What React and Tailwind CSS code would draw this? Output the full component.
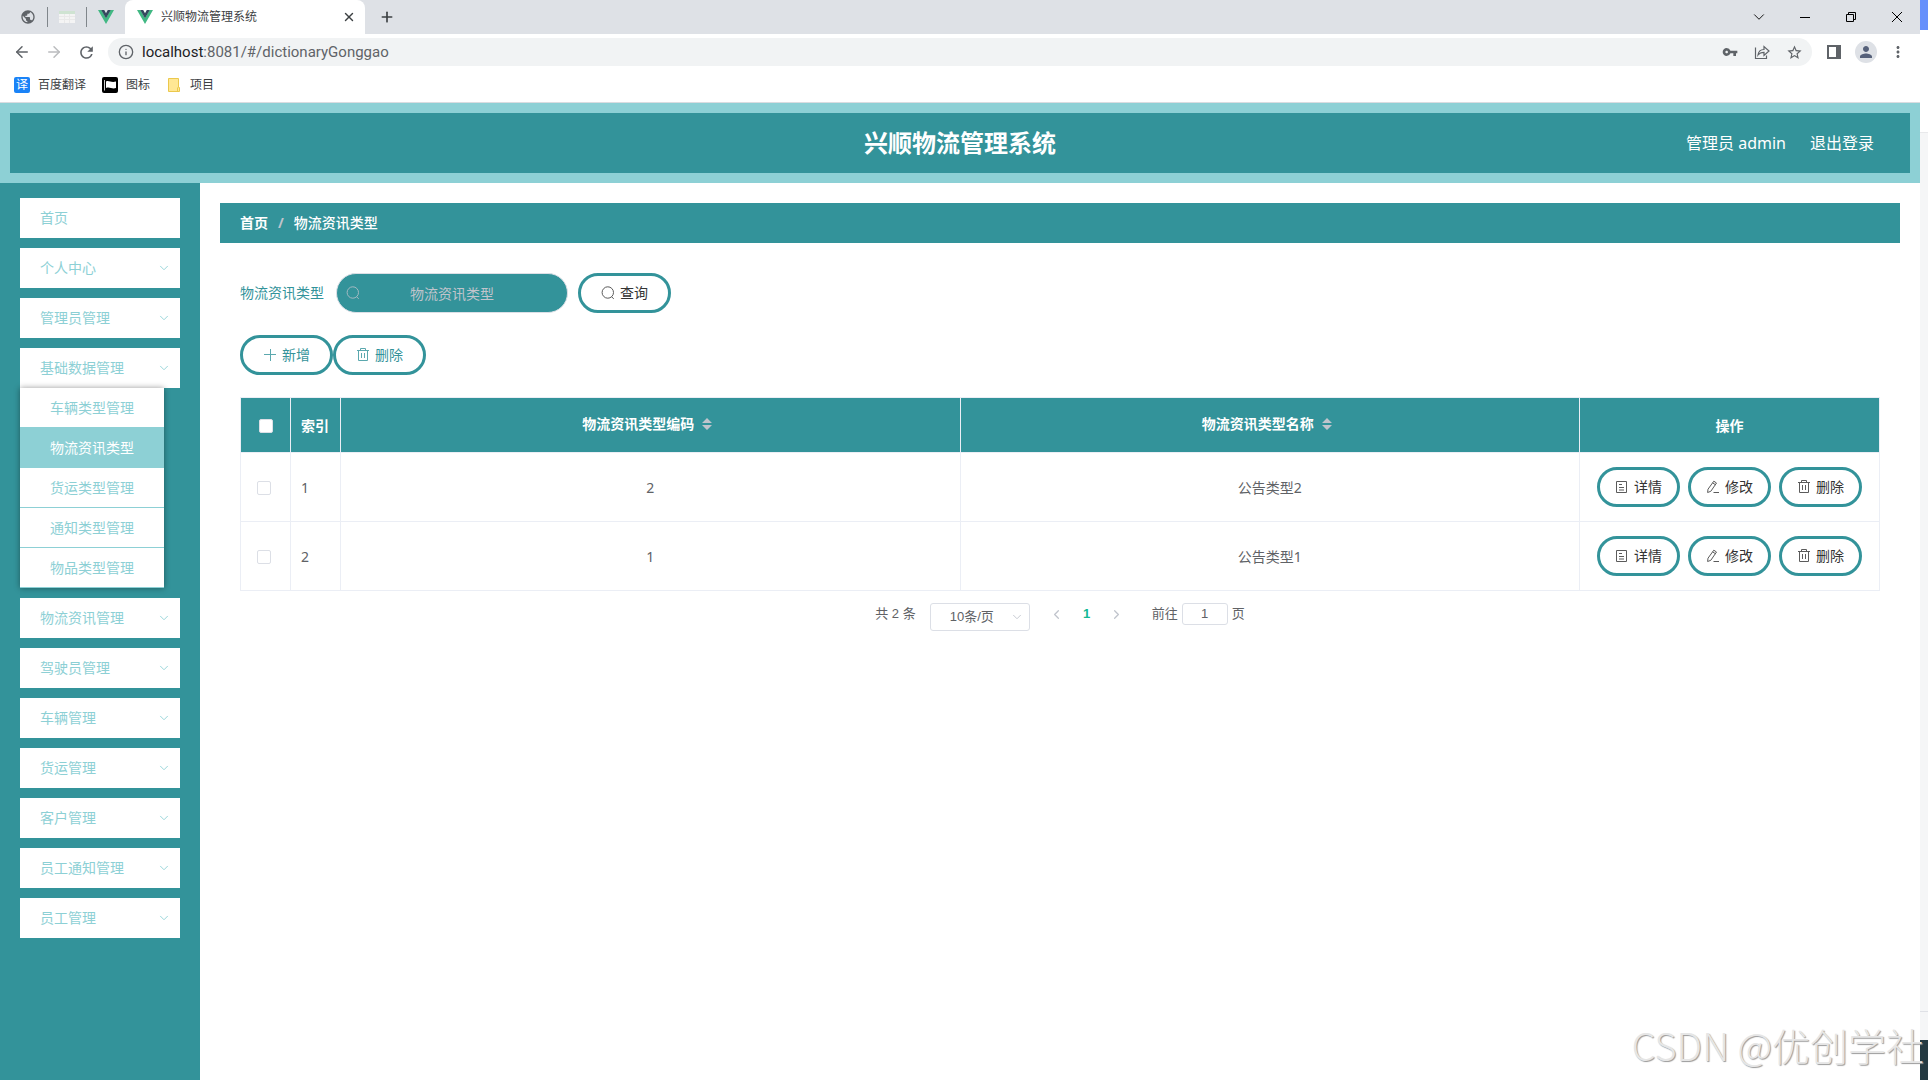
import { useState } from 'react';
import {
  ArrowLeft, ArrowRight, ChevronDown, ChevronLeft, ChevronRight, Info, Plus, X
} from 'lucide-react';
import { MdPublic, MdRefresh, MdVpnKey, MdStarBorder, MdPerson, MdMoreVert } from 'react-icons/md';

const MENU = [
  { title: '首页' },
  { title: '个人中心', children: [] },
  { title: '管理员管理', children: [] },
  {
    title: '基础数据管理',
    open: true,
    children: ['车辆类型管理', '物流资讯类型', '货运类型管理', '通知类型管理', '物品类型管理'],
  },
  { title: '物流资讯管理', children: [] },
  { title: '驾驶员管理', children: [] },
  { title: '车辆管理', children: [] },
  { title: '货运管理', children: [] },
  { title: '客户管理', children: [] },
  { title: '员工通知管理', children: [] },
  { title: '员工管理', children: [] },
];

const ROWS = [
  { id: 1, code: 2, name: '公告类型2' },
  { id: 2, code: 1, name: '公告类型1' },
];

/* ── Icons ── */
function VueLogo() {
  return (
    <svg viewBox="0 0 16 16" className="size-4 shrink-0">
      <path d="M0 1h3.4L8 9l4.6-8H16L8 15z" fill="#41b883" />
      <path d="M3.2 1h3L8 4.2 9.8 1h3L8 9.3z" fill="#35495e" />
    </svg>
  );
}

function SearchIcon() {
  return (
    <svg viewBox="0 0 14 14" className="size-[14px] shrink-0 opacity-80" fill="none" stroke="currentColor">
      <circle cx="6.8" cy="6.5" r="5.7" />
      <path d="M10.6 10.8l2.2 2" />
    </svg>
  );
}

function PlusIcon() {
  return (
    <svg viewBox="0 0 14 14" className="size-[14px] shrink-0 opacity-80" fill="none" stroke="currentColor">
      <path d="M1 6.5h12M7.5 1v12" />
    </svg>
  );
}

function TrashIcon() {
  return (
    <svg viewBox="0 0 14 14" className="size-[14px] shrink-0 opacity-80" fill="none" stroke="currentColor">
      <path d="M1 2.5h12M4.5 2.5v-2h5v2M2.5 2.5v10h9v-10M5.5 5v5M8.5 5v5" />
    </svg>
  );
}

function TicketIcon() {
  return (
    <svg viewBox="0 0 14 14" className="size-[14px] shrink-0 opacity-80" fill="none" stroke="currentColor">
      <path d="M1.5 1.5h10v11h-10zM4 4.5h3M4 7.5h5M4 10h5" />
    </svg>
  );
}

function EditIcon() {
  return (
    <svg viewBox="0 0 14 14" className="size-[14px] shrink-0 opacity-80" fill="none" stroke="currentColor">
      <path d="M7.8 1.2l2.7 1.8-5.7 8.3-3.2 1.2.4-3.3zM6.7 2.9l2.7 1.8M7.5 12.5H13" />
    </svg>
  );
}

function ShareIcon() {
  return (
    <svg viewBox="0 0 16 16" className="size-4" fill="none" stroke="currentColor" strokeWidth="1.2">
      <path d="M1.5 3.5v11h11v-3M4 11c.5-4 3-5.5 6-5.5V2.5L15 7l-5 4.5V8.3C7.5 8.3 5.500 9 4 11z" />
    </svg>
  );
}

function SortCaret() {
  return (
    <svg viewBox="0 0 10 12" className="w-[10px] h-3" fill="#c0c4cc">
      <path d="M5 0l5 5H0zM5 12l5-5H0z" />
    </svg>
  );
}

function PillButton({ icon: Icon, className, children }) {
  return (
    <button className={`h-10 flex items-center gap-[5px] rounded-full border-3 border-[#33939a] bg-white text-sm ${className}`}>
      <Icon />
      {children}
    </button>
  );
}

/* ── Browser window ── */
function TabBar() {
  return (
    <div className="h-[34px] bg-[#dee1e6] flex items-center text-[#5f6368]">
      <div className="w-[125px] flex items-center pl-5">
        <MdPublic size={16} />
        <span className="ml-[11px] w-px h-5 bg-[#80868b]" />
        <svg viewBox="0 0 16 12" className="w-4 h-3 ml-[11px]">
          <path d="M0 0h16v12H0z" fill="#f4f4f4" />
          <path d="M0 0h16v3H0z" fill="#cfe3d2" />
          <path d="M0 5.5h16M0 8.5h16M5.5 3v9M10.5 3v9" stroke="#e9e9e9" />
        </svg>
        <span className="ml-[11px] mr-[11px] w-px h-5 bg-[#80868b]" />
        <VueLogo />
      </div>
      <div className="w-60 h-full bg-white rounded-t-lg flex items-center pl-3">
        <VueLogo />
        <span className="ml-2 flex-1 text-xs text-[#3c4043]">兴顺物流管理系统</span>
        <button aria-label="关闭标签页" className="mr-[9px] text-[#3c4043]"><X size={14} strokeWidth={2.5} /></button>
      </div>
      <button aria-label="新标签页" className="ml-[14px] text-[#3c4043]"><Plus size={16} strokeWidth={2.5} /></button>
      <div className="ml-auto flex items-center text-black h-7">
        <button aria-label="搜索标签页" className="w-[46px] flex justify-center"><ChevronDown size={18} strokeWidth={1.2} /></button>
        <button aria-label="最小化" className="w-[46px] flex justify-center">
          <svg viewBox="0 0 10 10" className="size-[10px]" stroke="currentColor"><path d="M0 5.5h10" /></svg>
        </button>
        <button aria-label="还原" className="w-[46px] flex justify-center">
          <svg viewBox="0 0 10 10" className="size-[10px]" fill="none" stroke="currentColor"><path d="M.5 2.5h7v7h-7zM2.5 2.5v-2h7v7h-2" /></svg>
        </button>
        <button aria-label="关闭" className="w-[46px] flex justify-center">
          <svg viewBox="0 0 10 10" className="size-[10px]" stroke="currentColor"><path d="M0 0l10 10M10 0L0 10" /></svg>
        </button>
      </div>
    </div>
  );
}

function Toolbar() {
  return (
    <div className="h-9 flex items-center text-[#5f6368] pl-[13px] pr-[13px]">
      <button aria-label="后退" className="w-8"><ArrowLeft size={18} /></button>
      <button aria-label="前进" className="w-8 text-[#babcbe]"><ArrowRight size={18} /></button>
      <button aria-label="刷新" className="w-[31px]"><MdRefresh size={19} /></button>
      <div className="flex-1 h-7 rounded-full bg-[#f1f3f4] flex items-center pl-[10px] pr-[9px]">
        <Info size={16} />
        <div className="relative flex-1 ml-2 text-[15px] leading-5 font-[Roboto,sans-serif]">
          <input aria-label="地址" readOnly defaultValue="localhost:8081/#/dictionaryGonggao" className="w-full block bg-transparent outline-none" />
          <span aria-hidden="true" className="absolute left-0 top-0 text-[#202124] bg-[#f1f3f4]">localhost</span>
        </div>
        <div className="flex items-center gap-4">
          <MdVpnKey size={16} />
          <ShareIcon />
          <MdStarBorder size={17} />
        </div>
      </div>
      <svg viewBox="0 0 14 14" className="size-[14px] ml-[15px]">
        <path d="M1 1h12v12H1z" fill="#fff" stroke="currentColor" strokeWidth="2" />
        <path d="M9 0h5v14H9z" fill="currentColor" />
      </svg>
      <span className="size-[22px] ml-[14px] rounded-full bg-[#dee1e6] flex items-center justify-center text-[#56617a]">
        <MdPerson size={18} />
      </span>
      <button aria-label="更多" className="ml-[12px]"><MdMoreVert size={18} /></button>
    </div>
  );
}

function Bookmarks() {
  return (
    <div className="h-[33px] pb-[3px] border-b border-[#dadce0] flex items-center pl-[14px] text-xs text-[#3c4043]">
      <a href="#fanyi" className="flex items-center gap-2">
        <span className="size-4 rounded-xs bg-[#1a83f7] text-white flex items-center justify-center">译</span>
        百度翻译
      </a>
      <a href="#tubiao" className="flex items-center gap-2 ml-4">
        <svg viewBox="0 0 16 16" className="size-4">
          <rect width="16" height="16" rx="2" fill="#000" />
          <path d="M2.5 3v10.5" stroke="#ccc" />
          <path d="M4 4.5c3-1.500 5 1.500 10 0v6.500c-4 1.500-6-1.500-10 0z" fill="#fff" />
        </svg>
        图标
      </a>
      <a href="#xiangmu" className="flex items-center gap-[10px] ml-[18px]">
        <svg viewBox="0 0 12 14" className="w-3 h-[14px]">
          <path d="M.5.5h10v9h1v4H.5z" fill="#ffe794" stroke="#ebc84c" />
          <path d="M9.5 13.5v-4" stroke="#ebc84c" />
        </svg>
        项目
      </a>
    </div>
  );
}

/* ── Application ── */
function Header() {
  return (
    <header className="h-20 border-10 border-[#8dd0d5] bg-[#33939a] text-white grid grid-cols-3 items-center">
      <h1 className="col-start-2 text-2xl font-bold text-center">兴顺物流管理系统</h1>
      <div className="flex justify-end gap-6 pr-9 text-base">
        <span>管理员 admin</span>
        <a href="#logout">退出登录</a>
      </div>
    </header>
  );
}

function Sidebar() {
  return (
    <nav className="w-[200px] shrink-0 bg-[#33939a] px-5 pt-[15px] text-sm text-[#8dd0d5]">
      <ul className="space-y-[10px]">
        {MENU.map(item => (
          <li key={item.title}>
            <a href="#menu" className="h-10 bg-white flex items-center justify-between pl-5 pr-[9px]">
              {item.title}
              {item.children && <ChevronDown size={14} strokeWidth={1.5} />}
            </a>
            {item.open && (
              <ul className="w-36 shadow-[0_0_6px_rgba(0,0,0,0.4)]">
                {item.children.map(sub => (
                  <li key={sub}>
                    <a href="#submenu"
                      className={`h-10 flex items-center pl-[30px] border-b border-[#8dd0d5] ${sub === '物流资讯类型' ? 'bg-[#8dd0d5] text-white' : 'bg-white'}`}>
                      {sub}
                    </a>
                  </li>
                ))}
              </ul>
            )}
          </li>
        ))}
      </ul>
    </nav>
  );
}

const CHECKBOX = 'block appearance-none size-[14px] rounded-xs border border-[#dcdfe6] bg-white checked:bg-[#33939a]';
const CELL = 'border-r border-b border-[#ebeef5]';

function DataTable() {
  const [selected, setSelected] = useState([]);
  const toggle = id => setSelected(s => (s.includes(id) ? s.filter(i => i !== id) : [...s, id]));

  return (
    <table className="mt-[22px] w-full table-fixed border-separate border-spacing-0 border-t border-l border-[#ebeef5] text-sm text-[#606266]">
      <thead>
        <tr className="h-[55px] bg-[#33939a] text-white">
          <th className={`w-[50px] pl-[18px] pt-px ${CELL}`}>
            <input type="checkbox" aria-label="全选" className={CHECKBOX}
              onChange={e => setSelected(e.target.checked ? ROWS.map(r => r.id) : [])} />
          </th>
          <th className={`w-[50px] pl-[10px] pt-px text-left ${CELL}`}>索引</th>
          {['物流资讯类型编码', '物流资讯类型名称'].map(title => (
            <th key={title} className={`pb-[2px] ${CELL}`}>
              <div className="flex items-center justify-center gap-2 pr-[6px]">
                {title}
                <SortCaret />
              </div>
            </th>
          ))}
          <th className={`w-[300px] pt-px ${CELL}`}>操作</th>
        </tr>
      </thead>
      <tbody>
        {ROWS.map(row => (
          <tr key={row.id} className="h-[69px]">
            <td className={`pl-4 pt-[2px] ${CELL}`}>
              <input type="checkbox" aria-label={`选择 ${row.name}`} className={CHECKBOX}
                checked={selected.includes(row.id)} onChange={() => toggle(row.id)} />
            </td>
            <td className={`pl-[10px] pt-[2px] ${CELL}`}>{row.id}</td>
            <td className={`pt-[2px] text-center ${CELL}`}>{row.code}</td>
            <td className={`pt-[2px] text-center ${CELL}`}>{row.name}</td>
            <td className={CELL}>
              <div className="flex justify-center gap-2 text-[#333]">
                <PillButton icon={TicketIcon} className="px-[15px]">详情</PillButton>
                <PillButton icon={EditIcon} className="px-[15px]">修改</PillButton>
                <PillButton icon={TrashIcon} className="px-[15px]">删除</PillButton>
              </div>
            </td>
          </tr>
        ))}
      </tbody>
    </table>
  );
}

function Pagination() {
  return (
    <div className="mt-3 flex justify-center items-start text-[13px] leading-[22px] text-[#606266] font-[Liberation_Sans,Noto_Sans_CJK_SC,sans-serif]">
      <span className="mr-[14px]">共 2 条</span>
      <div className="relative mr-3">
        <select aria-label="每页条数" className="appearance-none block w-[100px] h-7 pl-[19px] border border-[#dcdfe6] rounded-[3px] bg-white">
          <option>10条/页</option>
        </select>
        <ChevronDown size={14} strokeWidth={1.5} className="absolute right-[6px] top-[7px] text-[#c0c4cc] pointer-events-none" />
      </div>
      <button aria-label="上一页" className="w-[30px] h-[22px] flex items-center justify-center text-[#c0c4cc]"><ChevronLeft size={15} /></button>
      <button className="w-[30px] h-[22px] font-bold text-[#13b894]">1</button>
      <button aria-label="下一页" className="w-[30px] h-[22px] flex items-center justify-center text-[#c0c4cc]"><ChevronRight size={15} /></button>
      <label htmlFor="jump" className="ml-5">前往</label>
      <input id="jump" defaultValue="1" className="w-[46px] h-[22px] mx-1 border border-[#dcdfe6] rounded-[3px] text-center" />
      <span>页</span>
    </div>
  );
}

function Content() {
  return (
    <main className="flex-1 min-w-0 p-5">
      <div className="h-10 bg-[#33939a] px-5 flex items-center gap-[9px] text-sm text-white">
        <a href="#home" className="font-bold">首页</a>
        <span className="font-bold text-[#c0c4cc] px-px">/</span>
        <span className="font-medium">物流资讯类型</span>
      </div>

      <div className="px-5 pt-[30px]">
        <form className="flex items-center text-sm" onSubmit={e => e.preventDefault()}>
          <label htmlFor="keyword" className="text-[#33939a] mr-3">物流资讯类型</label>
          <div className="relative mr-[10px]">
            <input id="keyword" placeholder="物流资讯类型"
              className="block w-[232px] h-10 px-[30px] rounded-full border border-[#dcdfe6] bg-[#33939a] text-white text-center placeholder:text-[#c0c4cc]" />
            <span className="absolute left-[10px] top-[13px] text-[#c0c4cc]"><SearchIcon /></span>
          </div>
          <PillButton icon={SearchIcon} className="px-5 text-[#333]">查询</PillButton>
        </form>

        <div className="mt-[22px] flex text-[#33939a]">
          <PillButton icon={PlusIcon} className="px-5">新增</PillButton>
          <PillButton icon={TrashIcon} className="px-5">删除</PillButton>
        </div>

        <DataTable />
        <Pagination />
      </div>
    </main>
  );
}

export default function App() {
  return (
    <div className="relative min-h-screen flex overflow-hidden bg-white font-[Noto_Sans,Noto_Sans_CJK_SC,sans-serif]">
      <div className="flex-1 min-w-0 flex flex-col">
        <TabBar />
        <Toolbar />
        <Bookmarks />
        <Header />
        <div className="flex-1 flex">
          <Sidebar />
          <Content />
        </div>
      </div>

      {/* Window behind the browser */}
      <div className="w-2 shrink-0 flex flex-col bg-[#f5f6f7]">
        <div className="h-[30px] bg-[#6690fb]" />
        <div className="h-[103px] bg-white border-b border-[#e8e9eb]" />
        <div className="flex-1" />
        <div className="h-[29px] border-t border-[#dfe1e6]" />
        <div className="h-10 bg-[#243a42]" />
      </div>

      <p className="absolute right-1 bottom-2 text-[38px] leading-[54px] font-light text-[#e6e6e6] [text-shadow:1px_1px_1px_#999] font-[Noto_Sans_CJK_SC,sans-serif]">
        CSDN @优创学社
      </p>
    </div>
  );
}
